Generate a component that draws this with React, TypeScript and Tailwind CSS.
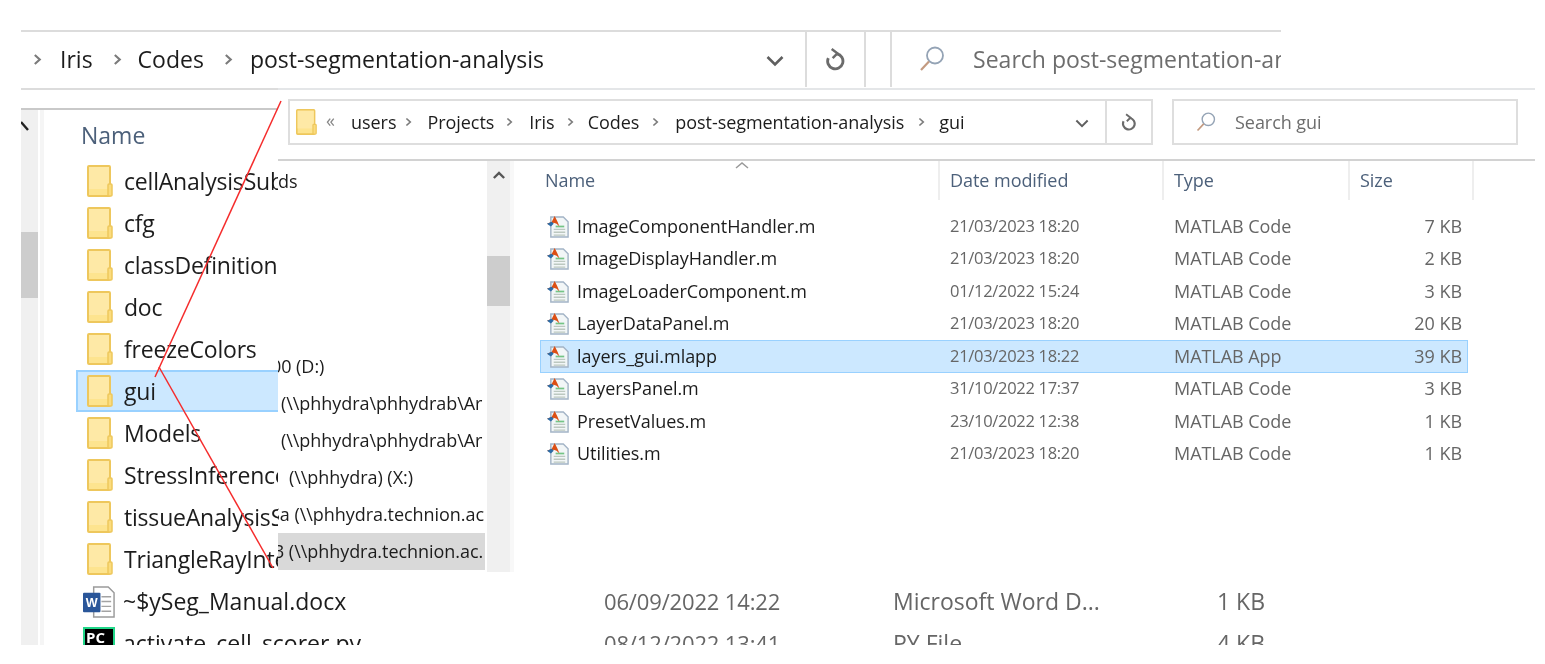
const font = "font-['Open_Sans',sans-serif]";

function Folder({ className }: { className: string }) {
  return (
    <svg viewBox="0 0 26 32" className={className}>
      <rect x="1" y="1" width="22" height="30" rx="1" fill="#fde48f" stroke="#eec75c" strokeWidth="2" />
      <path d="M2 2h20v22H2z" fill="#fee9a6" />
      <rect x="21" y="19" width="4" height="12" rx="1" fill="#fbdc7e" stroke="#eec75c" strokeWidth="1.5" />
    </svg>
  );
}

function Chevron({ className }: { className: string }) {
  return (
    <svg viewBox="0 0 10 14" className={className} fill="none" stroke="#7b7b7b" strokeWidth="2.4">
      <path d="M2 2l5.5 5L2 12" />
    </svg>
  );
}

function Down({ className }: { className: string }) {
  return (
    <svg viewBox="0 0 18 12" className={className} fill="none" stroke="#5f5f5f" strokeWidth="2.6">
      <path d="M1.5 2l7.5 7.5L16.500 2" />
    </svg>
  );
}

function Refresh({ className }: { className: string }) {
  return (
    <svg viewBox="0 0 22 24" className={className} fill="none" stroke="#6b6b6b" strokeWidth="3">
      <path d="M3.500 11a8 8 0 1 0 9-4.500" />
      <path d="M7 1.500l6 4.500-5 5" strokeWidth="2.600" />
    </svg>
  );
}

function Magnifier({ className }: { className: string }) {
  return (
    <svg viewBox="0 0 26 26" className={className} fill="none" strokeWidth="1.800">
      <circle cx="16" cy="9.500" r="8" stroke="#94a3b5" />
      <path d="M10 15.500L2 24" stroke="#c39a80" strokeWidth="2.200" />
    </svg>
  );
}

function MatlabFile() {
  return (
    <svg viewBox="0 0 24 24" className="w-[23px] h-[23px] shrink-0">
      <path d="M4 2h13l5 5v16H4z" fill="#f2f6f7" stroke="#a3b4c6" strokeWidth="1.500" />
      <path d="M7 15h12M7 18h12M7 21h12" stroke="#bcc8c0" strokeWidth="1.500" />
      <path d="M9 12h9" stroke="#74c486" strokeWidth="1.800" />
      <path d="M0 9l5-2 3-6 3 6 2 5-3-3-3-1-3 3z" fill="#dc4f14" />
      <path d="M0 9l5-2 2 2-3 3z" fill="#2b6ca8" />
    </svg>
  );
}

function WordFile() {
  return (
    <svg viewBox="0 0 34 34" className="w-[33px] h-[33px] shrink-0">
      <path d="M11 2h15l6 6v25H11z" fill="#fff" stroke="#9b9b9b" strokeWidth="1.500" />
      <path d="M19 12h10M19 17h10M19 22h10M19 27h10" stroke="#a3a3a3" strokeWidth="1.500" />
      <rect x="0" y="8" width="18" height="20" rx="1" fill="#2a5699" />
      <text x="9" y="23" textAnchor="middle" fontSize="13" fontWeight="700" fill="#fff" fontFamily="Liberation Sans">W</text>
    </svg>
  );
}

const backFolders = [
  "cellAnalysisSubroutines", "cfg", "classDefinition", "doc", "freezeColors",
  "gui", "Models", "StressInference", "tissueAnalysisSuite", "TriangleRayIntersection",
];

const navRows = [
  { text: "ds", cls: "" },
  { text: "", cls: "" },
  { text: "", cls: "" },
  { text: "", cls: "" },
  { text: "", cls: "" },
  { text: "00 (D:)", cls: "-ml-[7px]" },
  { text: "(\\\\phhydra\\phhydrab\\Ar", cls: "pl-[3px]" },
  { text: "(\\\\phhydra\\phhydrab\\Ar", cls: "pl-[3px]" },
  { text: "(\\\\phhydra) (X:)", cls: "pl-[11px]" },
  { text: "Sa (\\\\phhydra.technion.ac", cls: "-ml-[8px]" },
  { text: "3 (\\\\phhydra.technion.ac.", cls: "-ml-[4px] pr-[20px] bg-[#d9d9d9]" },
];

const files = [
  { name: "ImageComponentHandler.m", date: "21/03/2023 18:20", type: "MATLAB Code", size: "7 KB" },
  { name: "ImageDisplayHandler.m", date: "21/03/2023 18:20", type: "MATLAB Code", size: "2 KB" },
  { name: "ImageLoaderComponent.m", date: "01/12/2022 15:24", type: "MATLAB Code", size: "3 KB" },
  { name: "LayerDataPanel.m", date: "21/03/2023 18:20", type: "MATLAB Code", size: "20 KB" },
  { name: "layers_gui.mlapp", date: "21/03/2023 18:22", type: "MATLAB App", size: "39 KB", selected: true },
  { name: "LayersPanel.m", date: "31/10/2022 17:37", type: "MATLAB Code", size: "3 KB" },
  { name: "PresetValues.m", date: "23/10/2022 12:38", type: "MATLAB Code", size: "1 KB" },
  { name: "Utilities.m", date: "21/03/2023 18:20", type: "MATLAB Code", size: "1 KB" },
];

function BackWindow() {
  return (
    <div className="absolute left-[21px] top-[30px] w-[1260px] h-[615px] overflow-hidden bg-white flex flex-col text-[#1c1c1c]">
      {/* address bar */}
      <div className="h-[60px] shrink-0 border-y-2 border-[#dcdcdc] flex items-center text-[23px] pb-[2px]">
        <Chevron className="w-[9px] h-[13px] ml-[12px]" />
        <span className="ml-[18px]">Iris</span>
        <Chevron className="w-[9px] h-[13px] ml-[20px]" />
        <span className="ml-[16px]">Codes</span>
        <Chevron className="w-[9px] h-[13px] ml-[20px]" />
        <span className="ml-[17px]">post-segmentation-analysis</span>
        <Down className="w-[18px] h-[12px] ml-[222px] mt-[3px]" />
        <div className="ml-[21px] w-[61px] h-[56px] border-x-2 border-[#dcdcdc] flex items-center justify-center">
          <Refresh className="w-[21px] h-[24px]" />
        </div>
        <div className="ml-[24px] flex-1 min-w-0 h-[56px] border-l-2 border-[#dcdcdc] flex items-center overflow-hidden whitespace-nowrap text-[#6d6d6d]">
          <Magnifier className="w-[26px] h-[26px] ml-[27px] shrink-0" />
          <span className="ml-[28px]">Search post-segmentation-analysis</span>
        </div>
      </div>

      {/* file pane */}
      <div className="mt-[18px] flex-1 min-h-0 border-t-2 border-[#c9c9c9] flex">
        <div className="w-[17px] shrink-0 bg-[#f0f0f0] flex flex-col">
          <svg viewBox="0 0 10 14" className="w-[10px] h-[14px] mt-[11px]" fill="none" stroke="#222" strokeWidth="2.400">
            <path d="M0 1l7 8" />
          </svg>
          <div className="mt-[97px] h-[66px] bg-[#cdcdcd]" />
        </div>
        <div className="w-[4px] shrink-0 ml-[2px] bg-[#f5f5f5]" />
        <div className="flex-1 min-w-0 pl-[32px] whitespace-nowrap">
          <div className="h-[50px] pl-[5px] flex items-center text-[23px] text-[#4c607a]">Name</div>
          {backFolders.map((name) => (
            <div
              key={name}
              className={`h-[42px] flex items-center pl-[11px] border-2 ${
                name === "gui" ? "bg-[#cce8ff] border-[#99d1ff]" : "border-transparent"
              } box-border`}
            >
              <Folder className="w-[26px] h-[32px] shrink-0 -ml-[2px]" />
              <span className="ml-[11px] text-[23px] tracking-[-0.2px] leading-none">{name}</span>
            </div>
          ))}
          <div className="h-[42px] grid grid-cols-[528px_289px_312px_60px] items-center text-[23px]">
            <div className="flex items-center pl-[7px]">
              <WordFile />
              <span className="ml-[7px]">~$ySeg_Manual.docx</span>
            </div>
            <span className="text-[#666] text-[22px] tracking-[-0.15px]">06/09/2022 14:22</span>
            <span className="text-[#666]">Microsoft Word D...</span>
            <span className="text-right text-[#666]">1 KB</span>
          </div>
          <div className="h-[42px] grid grid-cols-[528px_289px_312px_60px] items-center text-[23px]">
            <div className="flex items-center pl-[7px]">
              <div className="w-[32px] h-[32px] shrink-0 bg-black border-2 border-[#21d789] text-white text-[15px] font-bold leading-none pt-[1px] pl-[1px]">PC</div>
              <span className="ml-[8px]">activate_cell_scorer.py</span>
            </div>
            <span className="text-[#666] text-[22px] tracking-[-0.15px]">08/12/2022 13:41</span>
            <span className="text-[#666]">PY File</span>
            <span className="text-right text-[#666]">4 KB</span>
          </div>
        </div>
      </div>
    </div>
  );
}

function FrontWindow() {
  return (
    <div className="absolute left-[278px] top-[88px] w-[1257px] h-[484px] bg-white flex flex-col text-[#1c1c1c] overflow-hidden">
      <div className="h-[73px] shrink-0 border-t-[2px] border-b-[2px] border-t-[#e4e6e8] border-b-[#d2d2d2] flex items-start pt-[9px] pl-[10px] text-[18px] tracking-[-0.05px] whitespace-nowrap">
        <div className="w-[865px] h-[46px] border-2 border-[#dedede] flex items-center">
          <Folder className="w-[21px] h-[26px] ml-[6px] shrink-0" />
          <span className="ml-[9px] -mt-[4px] w-[15px] text-[#888] leading-none">«</span>
          <span className="ml-[10px]">users</span>
          <Chevron className="w-[7px] h-[10px] ml-[9px]" />
          <span className="ml-[15px]">Projects</span>
          <Chevron className="w-[7px] h-[10px] ml-[12px]" />
          <span className="ml-[16px]">Iris</span>
          <Chevron className="w-[7px] h-[10px] ml-[12px]" />
          <span className="ml-[14px]">Codes</span>
          <Chevron className="w-[7px] h-[10px] ml-[13px]" />
          <span className="ml-[16px]">post-segmentation-analysis</span>
          <Chevron className="w-[7px] h-[10px] ml-[14px]" />
          <span className="ml-[14px]">gui</span>
          <Down className="w-[14px] h-[9px] ml-auto mr-[16px] mt-[2px]" />
          <div className="w-[46px] h-full border-l-2 border-[#dedede] flex items-center justify-center">
            <Refresh className="w-[16px] h-[18px]" />
          </div>
        </div>
        <div className="ml-[19px] w-[346px] h-[46px] border-2 border-[#dedede] flex items-center text-[#6d6d6d]">
          <Magnifier className="w-[20px] h-[20px] ml-[22px]" />
          <span className="ml-[19px]">Search gui</span>
        </div>
      </div>

      <div className="flex-1 min-h-0 flex">
        {/* nav tree */}
        <div className="w-[207px] shrink-0 overflow-hidden pt-[2px] whitespace-nowrap text-[18px] tracking-[-0.05px]">
          {navRows.map((row, i) => (
            <div key={i} className={`h-[37px] leading-[37px] ${row.cls}`}>{row.text}</div>
          ))}
        </div>
        <div className="w-[23px] ml-[2px] shrink-0 bg-[#f0f0f0] flex flex-col items-center">
          <svg viewBox="0 0 14 9" className="w-[12px] h-[8px] mt-[10px]" fill="none" stroke="#555" strokeWidth="2.800">
            <path d="M1 8l6-6 6 6" />
          </svg>
          <div className="mt-[77px] h-[50px] w-full bg-[#cdcdcd]" />
        </div>
        <div className="w-[4px] shrink-0 bg-[#f8f8f8]" />

        {/* details */}
        <div className="flex-1 min-w-0 pl-[26px] relative whitespace-nowrap text-[18px] tracking-[-0.05px]">
          <svg viewBox="0 0 14 7" className="absolute left-[221px] top-[1px] w-[14px] h-[7px]" fill="none" stroke="#999" strokeWidth="1.500">
            <path d="M1 6l6-5 6 5" />
          </svg>
          <div className="h-[39px] grid grid-cols-[400px_224px_186px_124px] text-[#4c607a]">
            <div className="pl-[5px] leading-[39px] border-r-2 border-[#eeeeee]">Name</div>
            <div className="pl-[10px] leading-[39px] border-r-2 border-[#eeeeee]">Date modified</div>
            <div className="pl-[10px] leading-[39px] border-r-2 border-[#eeeeee]">Type</div>
            <div className="pl-[10px] leading-[39px] border-r-2 border-[#eeeeee]">Size</div>
          </div>
          <div className="pt-[10px]">
            {files.map((file) => (
              <div
                key={file.name}
                className={`h-[32.500px] w-[928px] grid grid-cols-[400px_224px_158px_139px] items-center border ${
                  file.selected ? "bg-[#cce8ff] border-[#99d1ff]" : "border-transparent"
                }`}
              >
                <div className="flex items-center pl-[6px] text-[#1c1c1c]">
                  <MatlabFile />
                  <span className="ml-[7px]">{file.name}</span>
                </div>
                <span className="text-[#666] pl-[9px] text-[16.500px] tracking-[-0.3px]">{file.date}</span>
                <span className="text-[#666] pl-[9px]">{file.type}</span>
                <span className="text-[#666] text-right">{file.size}</span>
              </div>
            ))}
          </div>
        </div>
      </div>
    </div>
  );
}

export default function App() {
  return (
    <div className={`relative w-[1545px] h-[664px] overflow-hidden bg-white blur-[0.4px] ${font}`}>
      <BackWindow />
      <FrontWindow />
      {/* red annotation arrows between the two windows */}
      <svg viewBox="0 0 1545 664" className="absolute inset-0 w-[1545px] h-[664px] pointer-events-none" fill="none" stroke="#f52c2c" strokeWidth="1.500">
        <path d="M281 101L155 377" />
        <path d="M159 367L273 568" />
      </svg>
    </div>
  );
}
